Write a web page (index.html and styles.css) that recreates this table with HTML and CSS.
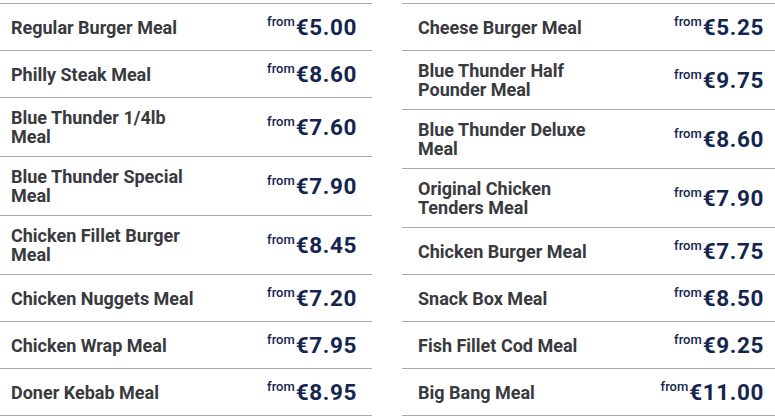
FILE: index.html
```html
<!DOCTYPE html>
<html lang="en">
<head>
<meta charset="utf-8">
<title>Meals</title>
<link rel="stylesheet" href="styles.css">
</head>
<body>
<div class="menu">
  <ul class="col">
    <li class="row"><span class="name">Regular Burger Meal</span><span class="price"><sup>from</sup>€5.00</span></li>
    <li class="row"><span class="name">Philly Steak Meal</span><span class="price"><sup>from</sup>€8.60</span></li>
    <li class="row"><span class="name">Blue Thunder 1/4lb Meal</span><span class="price"><sup>from</sup>€7.60</span></li>
    <li class="row"><span class="name">Blue Thunder Special Meal</span><span class="price"><sup>from</sup>€7.90</span></li>
    <li class="row"><span class="name">Chicken Fillet Burger Meal</span><span class="price"><sup>from</sup>€8.45</span></li>
    <li class="row"><span class="name">Chicken Nuggets Meal</span><span class="price"><sup>from</sup>€7.20</span></li>
    <li class="row"><span class="name">Chicken Wrap Meal</span><span class="price"><sup>from</sup>€7.95</span></li>
    <li class="row"><span class="name">Doner Kebab Meal</span><span class="price"><sup>from</sup>€8.95</span></li>
  </ul>
  <ul class="col">
    <li class="row"><span class="name">Cheese Burger Meal</span><span class="price"><sup>from</sup>€5.25</span></li>
    <li class="row"><span class="name">Blue Thunder Half Pounder Meal</span><span class="price"><sup>from</sup>€9.75</span></li>
    <li class="row"><span class="name">Blue Thunder Deluxe Meal</span><span class="price"><sup>from</sup>€8.60</span></li>
    <li class="row"><span class="name">Original Chicken Tenders Meal</span><span class="price"><sup>from</sup>€7.90</span></li>
    <li class="row"><span class="name">Chicken Burger Meal</span><span class="price"><sup>from</sup>€7.75</span></li>
    <li class="row"><span class="name">Snack Box Meal</span><span class="price"><sup>from</sup>€8.50</span></li>
    <li class="row"><span class="name">Fish Fillet Cod Meal</span><span class="price"><sup>from</sup>€9.25</span></li>
    <li class="row"><span class="name">Big Bang Meal</span><span class="price"><sup>from</sup>€11.00</span></li>
  </ul>
</div>
</body>
</html>
```
FILE: styles.css
```css
html, body {
  margin: 0;
  padding: 0;
  background: #ffffff;
}
body {
  font-family: Roboto, "Liberation Sans", sans-serif;
  overflow: hidden;
}
.menu {
  display: grid;
  grid-template-columns: 377px 377px;
  column-gap: 30px;
  margin-left: -5px;
  padding-top: 3px;
}
.col {
  list-style: none;
  margin: 0;
  padding: 0;
  border-top: 1px solid #a8a8a8;
}
.row {
  display: flex;
  align-items: center;
  justify-content: space-between;
  min-height: 47px;
  padding: 10px 15px 10px 16px;
  box-sizing: border-box;
  border-bottom: 1px solid #a8a8a8;
}
.name {
  font-size: 18px;
  font-weight: 700;
  line-height: 19px;
  color: #383a3e;
  max-width: 190px;
}
.price {
  font-size: 22.5px;
  font-weight: 700;
  color: #14264f;
  letter-spacing: 0.6px;
  line-height: 26px;
  white-space: nowrap;
}
.price sup {
  font-size: 13px;
  font-weight: 500;
  letter-spacing: 0;
  vertical-align: 9px;
  line-height: 0;
  margin-right: 1px;
}
```
